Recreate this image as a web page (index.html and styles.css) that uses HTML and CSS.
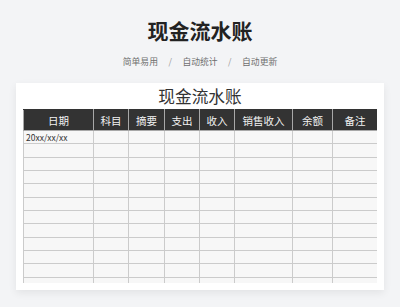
FILE: index.html
```html
<!DOCTYPE html>
<html lang="zh-CN">
<head>
<meta charset="utf-8">
<link rel="stylesheet" href="styles.css">
</head>
<body>
<header class="hero">
  <h1 class="hero-title">现金流水账</h1>
  <p class="hero-tags"><span>简单易用</span><span class="sep">/</span><span>自动统计</span><span class="sep">/</span><span>自动更新</span></p>
</header>
<section class="card">
  <h2 class="card-title">现金流水账</h2>
  <div class="sheet">
    <table class="ledger">
      <colgroup>
        <col class="c-date"><col class="c-a"><col class="c-b"><col class="c-a"><col class="c-a"><col class="c-sale"><col class="c-bal"><col class="c-note">
      </colgroup>
      <thead>
        <tr><th>日期</th><th>科目</th><th>摘要</th><th>支出</th><th>收入</th><th>销售收入</th><th>余额</th><th>备注</th></tr>
      </thead>
      <tbody>
        <tr><td class="date">20xx/xx/xx</td><td></td><td></td><td></td><td></td><td></td><td></td><td></td></tr>
        <tr><td></td><td></td><td></td><td></td><td></td><td></td><td></td><td></td></tr>
        <tr><td></td><td></td><td></td><td></td><td></td><td></td><td></td><td></td></tr>
        <tr><td></td><td></td><td></td><td></td><td></td><td></td><td></td><td></td></tr>
        <tr><td></td><td></td><td></td><td></td><td></td><td></td><td></td><td></td></tr>
        <tr><td></td><td></td><td></td><td></td><td></td><td></td><td></td><td></td></tr>
        <tr><td></td><td></td><td></td><td></td><td></td><td></td><td></td><td></td></tr>
        <tr><td></td><td></td><td></td><td></td><td></td><td></td><td></td><td></td></tr>
        <tr><td></td><td></td><td></td><td></td><td></td><td></td><td></td><td></td></tr>
        <tr><td></td><td></td><td></td><td></td><td></td><td></td><td></td><td></td></tr>
        <tr><td></td><td></td><td></td><td></td><td></td><td></td><td></td><td></td></tr>
        <tr><td></td><td></td><td></td><td></td><td></td><td></td><td></td><td></td></tr>
        <tr><td></td><td></td><td></td><td></td><td></td><td></td><td></td><td></td></tr>
      </tbody>
    </table>
  </div>
</section>
</body>
</html>
```
FILE: styles.css
```css
html, body {
  margin: 0;
  padding: 0;
}
body {
  width: 400px;
  height: 307px;
  overflow: hidden;
  background: #f3f4f6;
  font-family: "Noto Sans CJK SC", "Noto Sans", sans-serif;
  color: #333;
}
.hero {
  text-align: center;
  padding-top: 17px;
}
.hero-title {
  margin: 0;
  font-size: 21px;
  line-height: 26px;
  font-weight: 700;
  color: #222;
}
.hero-tags {
  margin: 13px 0 0;
  font-size: 8.8px;
  line-height: 12px;
  color: #6f6f6f;
  display: flex;
  justify-content: center;
  gap: 10.5px;
}
.hero-tags .sep {
  color: #999;
}
.card {
  margin: 15px 16px 0;
  background: #fff;
  padding: 0 7px 7px;
  box-shadow: 0 3px 8px rgba(0, 0, 0, 0.07);
}
.card-title {
  margin: 0;
  text-align: center;
  font-size: 16.7px;
  font-weight: 400;
  line-height: 26px;
  color: #333;
}
.sheet {
  height: 174px;
  overflow: hidden;
}
.ledger {
  width: 354px;
  table-layout: fixed;
  border-collapse: collapse;
}
.c-date { width: 70px; }
.c-a { width: 35px; }
.c-b { width: 36px; }
.c-sale { width: 58px; }
.c-bal { width: 40px; }
.c-note { width: 45px; }
.ledger th {
  background: #333;
  color: #f2f2f2;
  font-size: 10.5px;
  font-weight: 400;
  height: 20px;
  padding: 0;
  border: 1px solid #a8a8a8;
  border-top-color: #333;
}
.ledger td {
  background: #f7f7f7;
  border: 1px solid #cbcbcb;
  height: 12.33px;
  padding: 0;
  font-size: 8.5px;
  line-height: 10px;
}
.ledger td.date {
  padding-left: 2px;
  color: #333;
}
```
